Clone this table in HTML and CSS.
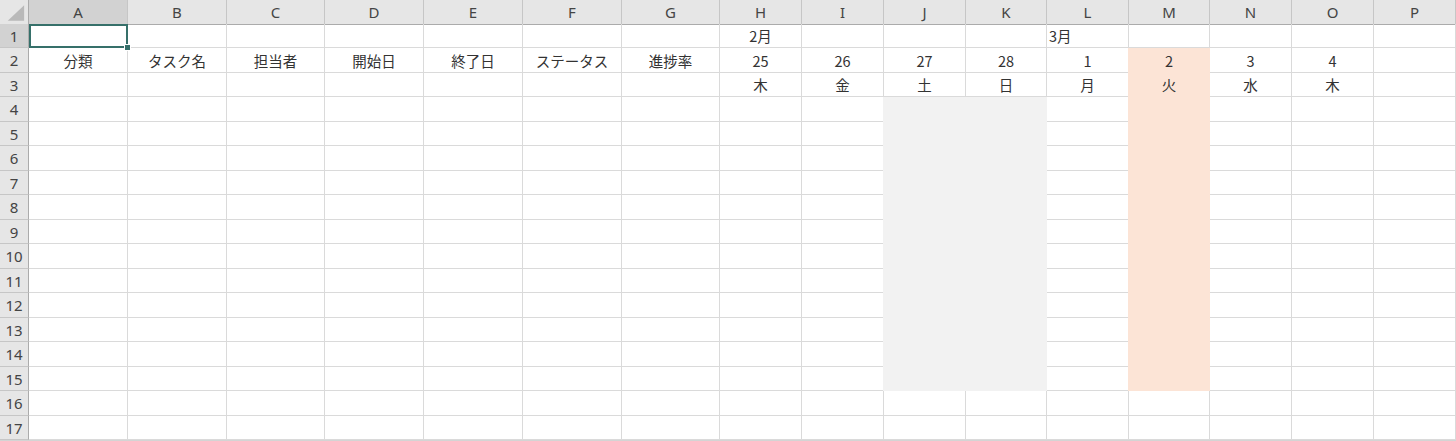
FILE: index.html
```html
<!DOCTYPE html>
<html lang="ja">
<head>
    <meta charset="UTF-8">
    <title>ガントチャート</title>
    <link rel="stylesheet" href="styles.css">
</head>
<body>
    <div class="sheet">
        <!-- 列見出し -->
        <div class="row head">
            <div class="corner">
                <svg width="29" height="24" viewBox="0 0 29 24"><polygon points="8,21 25,5 25,21" fill="#b9b9b9"/></svg>
            </div>
            <div class="col sel">A</div><div class="col">B</div><div class="col">C</div><div class="col">D</div>
            <div class="col">E</div><div class="col">F</div><div class="col">G</div><div class="col">H</div>
            <div class="col">I</div><div class="col">J</div><div class="col">K</div><div class="col">L</div>
            <div class="col">M</div><div class="col">N</div><div class="col">O</div><div class="col">P</div>
        </div>

        <div class="row short">
            <div class="num sel">1</div>
            <div class="cell active"><span class="select"></span><span class="handle"></span></div>
            <div class="cell"></div><div class="cell"></div><div class="cell"></div><div class="cell"></div><div class="cell"></div><div class="cell"></div>
            <div class="cell">2月</div><div class="cell"></div><div class="cell"></div><div class="cell"></div>
            <div class="cell left">3月</div><div class="cell"></div><div class="cell"></div><div class="cell"></div><div class="cell"></div>
        </div>

        <div class="row tall">
            <div class="num">2</div>
            <div class="cell">分類</div><div class="cell">タスク名</div><div class="cell">担当者</div><div class="cell">開始日</div>
            <div class="cell">終了日</div><div class="cell">ステータス</div><div class="cell">進捗率</div>
            <div class="cell">25</div><div class="cell">26</div><div class="cell">27</div><div class="cell">28</div>
            <div class="cell">1</div><div class="cell today">2</div><div class="cell">3</div><div class="cell">4</div><div class="cell"></div>
        </div>

        <div class="row short">
            <div class="num">3</div>
            <div class="cell"></div><div class="cell"></div><div class="cell"></div><div class="cell"></div><div class="cell"></div><div class="cell"></div><div class="cell"></div>
            <div class="cell">木</div><div class="cell">金</div><div class="cell">土</div><div class="cell">日</div>
            <div class="cell">月</div><div class="cell today">火</div><div class="cell">水</div><div class="cell">木</div><div class="cell"></div>
        </div>

        <div class="row tall">
            <div class="num">4</div>
            <div class="cell"></div><div class="cell"></div><div class="cell"></div><div class="cell"></div><div class="cell"></div><div class="cell"></div><div class="cell"></div>
            <div class="cell"></div><div class="cell"></div><div class="cell off"></div><div class="cell off"></div>
            <div class="cell"></div><div class="cell today"></div><div class="cell"></div><div class="cell"></div><div class="cell"></div>
        </div>
        <div class="row short">
            <div class="num">5</div>
            <div class="cell"></div><div class="cell"></div><div class="cell"></div><div class="cell"></div><div class="cell"></div><div class="cell"></div><div class="cell"></div>
            <div class="cell"></div><div class="cell"></div><div class="cell off"></div><div class="cell off"></div>
            <div class="cell"></div><div class="cell today"></div><div class="cell"></div><div class="cell"></div><div class="cell"></div>
        </div>
        <div class="row tall">
            <div class="num">6</div>
            <div class="cell"></div><div class="cell"></div><div class="cell"></div><div class="cell"></div><div class="cell"></div><div class="cell"></div><div class="cell"></div>
            <div class="cell"></div><div class="cell"></div><div class="cell off"></div><div class="cell off"></div>
            <div class="cell"></div><div class="cell today"></div><div class="cell"></div><div class="cell"></div><div class="cell"></div>
        </div>
        <div class="row short">
            <div class="num">7</div>
            <div class="cell"></div><div class="cell"></div><div class="cell"></div><div class="cell"></div><div class="cell"></div><div class="cell"></div><div class="cell"></div>
            <div class="cell"></div><div class="cell"></div><div class="cell off"></div><div class="cell off"></div>
            <div class="cell"></div><div class="cell today"></div><div class="cell"></div><div class="cell"></div><div class="cell"></div>
        </div>
        <div class="row tall">
            <div class="num">8</div>
            <div class="cell"></div><div class="cell"></div><div class="cell"></div><div class="cell"></div><div class="cell"></div><div class="cell"></div><div class="cell"></div>
            <div class="cell"></div><div class="cell"></div><div class="cell off"></div><div class="cell off"></div>
            <div class="cell"></div><div class="cell today"></div><div class="cell"></div><div class="cell"></div><div class="cell"></div>
        </div>
        <div class="row short">
            <div class="num">9</div>
            <div class="cell"></div><div class="cell"></div><div class="cell"></div><div class="cell"></div><div class="cell"></div><div class="cell"></div><div class="cell"></div>
            <div class="cell"></div><div class="cell"></div><div class="cell off"></div><div class="cell off"></div>
            <div class="cell"></div><div class="cell today"></div><div class="cell"></div><div class="cell"></div><div class="cell"></div>
        </div>
        <div class="row tall">
            <div class="num">10</div>
            <div class="cell"></div><div class="cell"></div><div class="cell"></div><div class="cell"></div><div class="cell"></div><div class="cell"></div><div class="cell"></div>
            <div class="cell"></div><div class="cell"></div><div class="cell off"></div><div class="cell off"></div>
            <div class="cell"></div><div class="cell today"></div><div class="cell"></div><div class="cell"></div><div class="cell"></div>
        </div>
        <div class="row short">
            <div class="num">11</div>
            <div class="cell"></div><div class="cell"></div><div class="cell"></div><div class="cell"></div><div class="cell"></div><div class="cell"></div><div class="cell"></div>
            <div class="cell"></div><div class="cell"></div><div class="cell off"></div><div class="cell off"></div>
            <div class="cell"></div><div class="cell today"></div><div class="cell"></div><div class="cell"></div><div class="cell"></div>
        </div>
        <div class="row tall">
            <div class="num">12</div>
            <div class="cell"></div><div class="cell"></div><div class="cell"></div><div class="cell"></div><div class="cell"></div><div class="cell"></div><div class="cell"></div>
            <div class="cell"></div><div class="cell"></div><div class="cell off"></div><div class="cell off"></div>
            <div class="cell"></div><div class="cell today"></div><div class="cell"></div><div class="cell"></div><div class="cell"></div>
        </div>
        <div class="row short">
            <div class="num">13</div>
            <div class="cell"></div><div class="cell"></div><div class="cell"></div><div class="cell"></div><div class="cell"></div><div class="cell"></div><div class="cell"></div>
            <div class="cell"></div><div class="cell"></div><div class="cell off"></div><div class="cell off"></div>
            <div class="cell"></div><div class="cell today"></div><div class="cell"></div><div class="cell"></div><div class="cell"></div>
        </div>
        <div class="row tall">
            <div class="num">14</div>
            <div class="cell"></div><div class="cell"></div><div class="cell"></div><div class="cell"></div><div class="cell"></div><div class="cell"></div><div class="cell"></div>
            <div class="cell"></div><div class="cell"></div><div class="cell off"></div><div class="cell off"></div>
            <div class="cell"></div><div class="cell today"></div><div class="cell"></div><div class="cell"></div><div class="cell"></div>
        </div>
        <div class="row short">
            <div class="num">15</div>
            <div class="cell"></div><div class="cell"></div><div class="cell"></div><div class="cell"></div><div class="cell"></div><div class="cell"></div><div class="cell"></div>
            <div class="cell"></div><div class="cell"></div><div class="cell off"></div><div class="cell off"></div>
            <div class="cell"></div><div class="cell today"></div><div class="cell"></div><div class="cell"></div><div class="cell"></div>
        </div>

        <div class="row tall">
            <div class="num">16</div>
            <div class="cell"></div><div class="cell"></div><div class="cell"></div><div class="cell"></div><div class="cell"></div><div class="cell"></div><div class="cell"></div>
            <div class="cell"></div><div class="cell"></div><div class="cell"></div><div class="cell"></div>
            <div class="cell"></div><div class="cell"></div><div class="cell"></div><div class="cell"></div><div class="cell"></div>
        </div>
        <div class="row short">
            <div class="num">17</div>
            <div class="cell"></div><div class="cell"></div><div class="cell"></div><div class="cell"></div><div class="cell"></div><div class="cell"></div><div class="cell"></div>
            <div class="cell"></div><div class="cell"></div><div class="cell"></div><div class="cell"></div>
            <div class="cell"></div><div class="cell"></div><div class="cell"></div><div class="cell"></div><div class="cell"></div>
        </div>
    </div>
</body>
</html>
```

FILE: styles.css
```css
body {
    margin: 0;
    background-color: #fff;
    overflow: hidden;
    font-family: "Noto Sans CJK JP", "Noto Sans", sans-serif;
}

.sheet {
    width: 1456px;
    border-bottom: 1px solid #d4d4d4;
}

.row {
    display: grid;
    grid-template-columns: 29px 99px 99px 98px 99px 99px 99px 98px 82px 82px 82px 81px 82px 81px 82px 82px 82px;
}

.row.head {
    height: 24px;
}

.row.short {
    height: 24px;
}

.row.tall {
    height: 25px;
}

.row > div {
    box-sizing: border-box;
    display: flex;
    align-items: center;
    justify-content: center;
    overflow: visible;
}

/* 見出し */
.corner {
    background-color: #e6e6e6;
    border-right: 1px solid #ababab;
    border-bottom: 1px solid #ababab;
    align-items: stretch !important;
}

.corner svg {
    display: block;
}

.col {
    background-color: #e6e6e6;
    border-right: 1px solid #c6c6c6;
    border-bottom: 1px solid #ababab;
    color: #444;
    font-family: "Noto Sans", "Noto Sans CJK JP", sans-serif;
    font-size: 15px;
}

.num {
    background-color: #e6e6e6;
    border-right: 1px solid #ababab;
    border-bottom: 1px solid #c6c6c6;
    color: #444;
    font-family: "Noto Sans", "Noto Sans CJK JP", sans-serif;
    font-size: 15px;
}

.col.sel,
.num.sel {
    background-color: #d2d2d2;
}

/* セル */
.cell {
    position: relative;
    border-right: 1px solid #dadada;
    border-bottom: 1px solid #dadada;
    color: #333;
    font-size: 14.5px;
}

.cell.left {
    justify-content: flex-start !important;
    padding-left: 2px;
}

.cell.off {
    background-color: #f2f2f2;
    border-color: #f2f2f2;
    box-shadow: -1px 0 0 #f2f2f2;
}

.cell.today {
    background-color: #fce4d6;
    border-color: #fce4d6;
    box-shadow: -1px 0 0 #fce4d6;
}

.select {
    position: absolute;
    top: 0;
    left: 0;
    right: -1px;
    bottom: -1px;
    border: 2px solid #36706a;
    z-index: 2;
}

.handle {
    position: absolute;
    right: -4px;
    bottom: -4px;
    width: 5px;
    height: 5px;
    background-color: #36706a;
    border: 1px solid #fff;
    z-index: 3;
}
```
